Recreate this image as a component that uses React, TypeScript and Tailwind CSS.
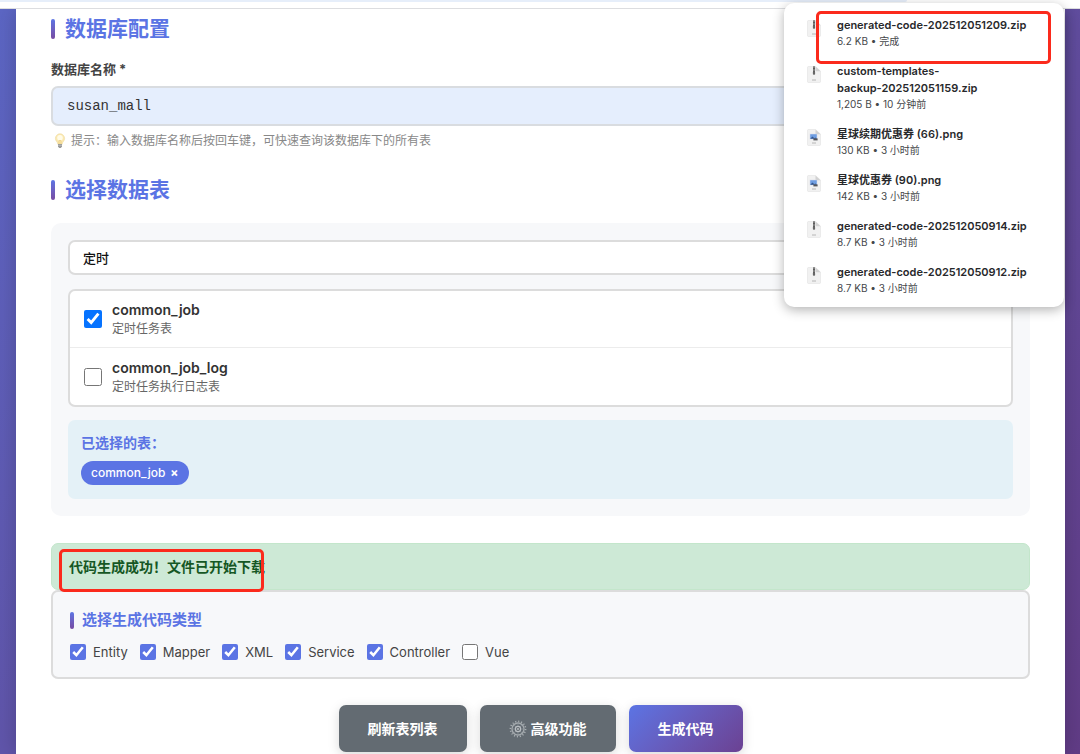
import { useState } from 'react';

// Names are kept in parts so a long one wraps between them
const DOWNLOADS = [
    { name: ['generated-code-202512051209.zip'], meta: '6.2 KB • 完成', kind: 'zip' },
    { name: ['custom-templates-', 'backup-202512051159.zip'], meta: '1,205 B • 10 分钟前', kind: 'zip' },
    { name: ['星球续期优惠券 (66).png'], meta: '130 KB • 3 小时前', kind: 'png' },
    { name: ['星球优惠券 (90).png'], meta: '142 KB • 3 小时前', kind: 'png' },
    { name: ['generated-code-202512050914.zip'], meta: '8.7 KB • 3 小时前', kind: 'zip' },
    { name: ['generated-code-202512050912.zip'], meta: '8.7 KB • 3 小时前', kind: 'zip' },
];

const TABLES = [
    { name: 'common_job', comment: '定时任务表' },
    { name: 'common_job_log', comment: '定时任务执行日志表' },
];

const CODE_TYPES = ['Entity', 'Mapper', 'XML', 'Service', 'Controller', 'Vue'];

function FileIcon({ kind }: { kind: string }) {
    return (
        <svg viewBox="0 0 14 17" className="mt-[3px] h-[17px] w-[14px] shrink-0" aria-hidden="true">
            <path d="M1.5.5h7L13.5 5v10.5a1 1 0 0 1-1 1h-11a1 1 0 0 1-1-1v-14a1 1 0 0 1 1-1z" fill="#f1f1f1" stroke="#e2e2e2" strokeWidth=".6" />
            <path d="M8.5.5 13.5 5.3H9.3a.8.8 0 0 1-.8-.8z" fill="#d2d2d2" />
            {kind === 'zip' ? (
                <>
                    <path d="M6.2.5h1.6v6.2H6.2z" fill="#8b8b8b" />
                    <path d="M7 .5v5.5" stroke="#4b4b4b" strokeWidth="1.6" strokeDasharray="1 .5" />
                    <rect x="5.9" y="5.6" width="2.2" height="3.2" rx=".8" fill="#666" />
                </>
            ) : (
                <>
                    <rect x="3" y="5" width="7" height="5" fill="#6f9ee2" stroke="#d5dcea" strokeWidth=".5" />
                    <path d="M3.2 9.8 5.5 7.6l1.8 1.6 1-.8 1.7 1.4z" fill="#34578f" />
                    <path d="M6.4 9.4h4.2v2H6.4z" fill="#54565c" />
                </>
            )}
            <path d="M5 14h4" stroke="#b0b0b0" strokeWidth=".9" />
        </svg>
    );
}

function BulbIcon() {
    return (
        <svg viewBox="0 0 12 16" className="h-4 w-3 shrink-0" aria-hidden="true">
            <path d="M6 .8a4.6 4.6 0 0 0-4.6 4.6c0 2 1.2 2.9 1.9 4.1.3.6.4 1.2.5 1.7h4.4c.1-.5.2-1.1.5-1.7.7-1.2 1.9-2.1 1.9-4.1A4.6 4.6 0 0 0 6 .8z" fill="#fbe9b0" stroke="#ecd9a0" strokeWidth=".6" />
            <ellipse cx="6" cy="4.8" rx="2.8" ry="2.9" fill="#fffbe8" />
            <path d="M5 11V7.5h2V11" fill="none" stroke="#eac671" strokeWidth=".6" />
            <path d="M4 11h4v2.4L6.8 15H5.2L4 13.4z" fill="#9a9b9a" />
            <path d="M4 12.4h4" stroke="#c8c8c8" strokeWidth=".6" />
        </svg>
    );
}

function GearIcon() {
    return (
        <svg viewBox="0 0 18 18" className="h-[18px] w-[18px]" fill="none" aria-hidden="true">
            <circle cx="9" cy="9" r="7.6" stroke="#a9afb3" strokeWidth="1.6" strokeDasharray="1.1 1.88" />
            <circle cx="9" cy="9" r="6" stroke="#a3a9ad" strokeWidth="1.4" />
            <path d="M9 3.5v3M9 11.5v3M3.5 9h3M11.5 9h3M5.1 5.1l2.1 2.1M10.8 10.8l2.1 2.1M5.1 12.9l2.1-2.1M10.8 7.2l2.1-2.1" stroke="#868e93" strokeWidth=".8" />
            <circle cx="9" cy="9" r="2.6" fill="#60686e" stroke="#b9bec2" strokeWidth="1.2" />
            <circle cx="9" cy="9" r=".9" fill="#c3c8cb" />
        </svg>
    );
}

function SectionTitle({ children }: { children: string }) {
    return (
        <h2 className="flex h-7 items-center gap-[10px] text-[21px] font-bold text-[#5b74e4]">
            <span className="h-5 w-1 rounded-sm bg-linear-to-b from-[#5b74e4] to-[#764ba2]" />
            {children}
        </h2>
    );
}

function DownloadsPopup() {
    return (
        <aside className="absolute top-[3px] right-4 w-[280px] rounded-[10px] bg-white pt-[14px] pr-6 pb-3 pl-[23px] shadow-[0_3px_12px_rgba(0,0,0,0.3)]">
            <ul className="flex flex-col gap-[15px]">
                {DOWNLOADS.map((file) => (
                    <li key={file.name.join('')} className="flex gap-4">
                        <FileIcon kind={file.kind} />
                        <div className="min-w-0">
                            <p className="text-[11px] leading-[17px] font-semibold text-[#27282b]">
                                {file.name.map((part) => (
                                    <span key={part} className="inline-block whitespace-nowrap">{part}</span>
                                ))}
                            </p>
                            <p className="text-[10px] leading-[14px] text-[#45474a]">{file.meta}</p>
                        </div>
                    </li>
                ))}
            </ul>
            <div className="pointer-events-none absolute top-2 right-[13px] h-[53px] w-[235px] rounded-[5px] border-3 border-[#fb2a1c]" />
        </aside>
    );
}

export default function App() {
    const [dbName, setDbName] = useState('susan_mall');
    const [search, setSearch] = useState('定时');
    const [selected, setSelected] = useState(['common_job']);
    const [types, setTypes] = useState(['Entity', 'Mapper', 'XML', 'Service', 'Controller']);

    const toggle = (list: string[], item: string) =>
        list.includes(item) ? list.filter((x) => x !== item) : [...list, item];

    return (
        <div className="relative flex min-h-screen flex-col overflow-hidden bg-white font-[Inter,'Noto_Sans_CJK_SC',sans-serif]">
            {/* Browser toolbar edge */}
            <div className="h-[9px] border-b border-[#dcdde0] bg-white">
                <div className="h-[2px] w-[84%] rounded-br-lg bg-[#e6eefa]" />
            </div>

            <div className="flex flex-1 overflow-hidden bg-linear-135 from-[#5c66c4] to-[#613c86] pr-[15px] pl-4">
                <main className="min-w-0 flex-1 bg-white px-[35px] pt-[6px] pb-[2px] shadow-[0_0_20px_rgba(0,0,0,0.2)]">
                    <SectionTitle>数据库配置</SectionTitle>

                    <label htmlFor="db-name" className="mt-4 block text-[13px] leading-5 font-bold text-[#444]">
                        数据库名称 *
                    </label>
                    <input
                        id="db-name"
                        value={dbName}
                        onChange={(e) => setDbName(e.target.value)}
                        className="mt-[7px] block h-10 w-full rounded-[7px] border-2 border-[#d9dce0] bg-[#e5eefd] px-[14px] font-['Liberation_Mono',monospace] text-[14px] text-[#333]"
                    />
                    <p className="mt-[5px] flex items-center gap-[5px] pl-[3px] text-[12px] leading-5 text-[#888]">
                        <BulbIcon />
                        提示：输入数据库名称后按回车键，可快速查询该数据库下的所有表
                    </p>

                    <div className="mt-[25px]">
                        <SectionTitle>选择数据表</SectionTitle>
                    </div>

                    <section className="mt-[19px] rounded-[10px] bg-[#f7f8fa] p-[17px]">
                        <input
                            aria-label="搜索"
                            value={search}
                            onChange={(e) => setSearch(e.target.value)}
                            className="block h-[35px] w-full rounded-[7px] border-2 border-[#dcdcdc] bg-white px-[13px] text-[13px] font-medium text-[#111]"
                        />
                        <div className="mt-[14px] divide-y divide-[#ececec] rounded-[7px] border-2 border-[#dcdcdc] bg-white">
                            {TABLES.map((table) => (
                                <label key={table.name} className="flex h-[57px] items-center gap-[10px] px-[14px]">
                                    <input
                                        type="checkbox"
                                        checked={selected.includes(table.name)}
                                        onChange={() => setSelected(toggle(selected, table.name))}
                                        className="h-[18px] w-[18px] accent-[#0673ff]"
                                    />
                                    <span>
                                        <span className="block text-[14px] leading-5 font-semibold text-[#333]">{table.name}</span>
                                        <span className="block text-[12px] leading-[18px] text-[#666]">{table.comment}</span>
                                    </span>
                                </label>
                            ))}
                        </div>

                        <div className="mt-[13px] rounded-[7px] bg-[#e4f1f7] px-[13px] pt-[13px] pb-[14px]">
                            <p className="text-[14px] leading-5 font-bold text-[#5b74e4]">已选择的表：</p>
                            <div className="mt-2 flex h-6 gap-2">
                                {selected.map((name) => (
                                    <span key={name} className="inline-flex h-6 items-center gap-[5px] rounded-full bg-[#5b74e4] px-[10px] text-[12px] font-medium text-white">
                                        {name}
                                        <button type="button" aria-label={`移除 ${name}`} onClick={() => setSelected(toggle(selected, name))} className="font-bold">
                                            ×
                                        </button>
                                    </span>
                                ))}
                            </div>
                        </div>
                    </section>

                    <div role="status" className="relative mt-[27px] rounded-[7px] border border-[#c3e6cb] bg-[#cde9d6] px-[17px] py-3 text-[14px] leading-[21px] font-bold text-[#155724]">
                        代码生成成功！文件已开始下载
                        <div className="pointer-events-none absolute top-[5px] left-[7px] h-[43px] w-[205px] rounded-[5px] border-3 border-[#fb2a1c]" />
                    </div>

                    <fieldset className="rounded-[7px] border-2 border-[#dcdcdc] bg-[#f7f8fa] px-[17px] pt-[18px] pb-[15px]">
                        <h3 className="flex h-5 items-center gap-2 text-[15px] font-bold text-[#5b74e4]">
                            <span className="h-[17px] w-1 rounded-sm bg-linear-to-b from-[#5b74e4] to-[#764ba2]" />
                            选择生成代码类型
                        </h3>
                        <div className="mt-3 flex h-5 flex-wrap items-center gap-3">
                            {CODE_TYPES.map((type) => (
                                <label key={type} className="flex items-center gap-[7px] text-[13px] leading-5 text-[#444]">
                                    <input
                                        type="checkbox"
                                        checked={types.includes(type)}
                                        onChange={() => setTypes(toggle(types, type))}
                                        className="h-4 w-4 accent-[#5b74e4]"
                                    />
                                    {type}
                                </label>
                            ))}
                        </div>
                    </fieldset>

                    <div className="mt-[26px] flex justify-center gap-[13px] text-[14px] font-bold text-white">
                        <button type="button" className="h-[47px] rounded-[7px] bg-[#636b72] px-[29px] shadow-[0_3px_12px_rgba(0,0,0,0.15)]">
                            刷新表列表
                        </button>
                        <button type="button" className="flex h-[47px] items-center gap-1 rounded-[7px] bg-[#636b72] px-[29px] shadow-[0_3px_12px_rgba(0,0,0,0.15)]">
                            <GearIcon />
                            高级功能
                        </button>
                        <button type="button" className="h-[47px] rounded-[7px] bg-linear-135 from-[#5b74e4] to-[#6b4192] px-[29px] shadow-[0_3px_12px_rgba(0,0,0,0.15)]">
                            生成代码
                        </button>
                    </div>
                </main>
            </div>

            <DownloadsPopup />
        </div>
    );
}
